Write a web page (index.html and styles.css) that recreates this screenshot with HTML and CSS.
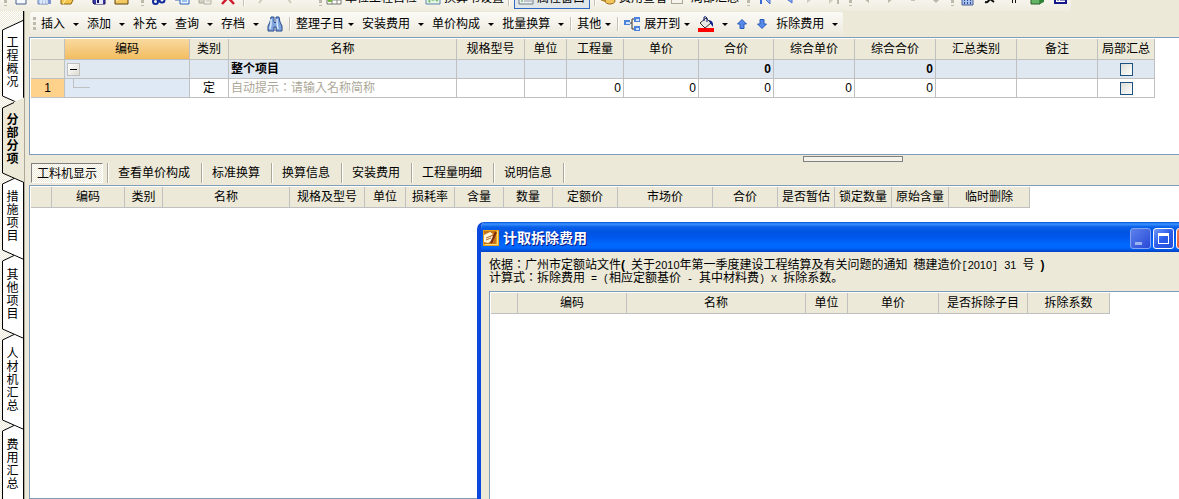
FILE: index.html
```html
<!DOCTYPE html>
<html lang="zh-CN">
<head>
<meta charset="utf-8">
<title>分部分项</title>
<link rel="stylesheet" href="styles.css">
</head>
<body>
<div class="app">
  <header class="topbar">
    <div class="seg seg-a">
      <i class="grip"></i>
      <svg class="ico" viewBox="0 0 16 16"><path d="M2 1h10v13H2z" fill="#f4f8ff" stroke="#4a5d8c"/></svg>
      <svg class="ico" viewBox="0 0 16 16"><path d="M1 2h10v12H1z" fill="#b9cdf0" stroke="#6c83b8"/><path d="M1 8h11M4 5v9M7 5v9M10 5v9" stroke="#fff"/><path d="M11 6h3v8h-3z" fill="#7c93cf"/></svg>
      <svg class="ico" viewBox="0 0 16 16"><path d="M1 14V4h5l2 2h7l-4 8z" fill="#f6c64c" stroke="#8a6410"/><path d="M3 14l4-7h8" fill="none" stroke="#fff3b0"/></svg>
      <svg class="ico wide-before" viewBox="0 0 16 16"><path d="M2 1h12v13H3l-1-1z" fill="#3a35a8" stroke="#17145c"/><path d="M5 9h7v5H5z" fill="#e8e8f8"/><path d="M6 10h2v3H6z" fill="#17145c"/></svg>
      <svg class="ico" viewBox="0 0 16 16"><path d="M1 2h13v12H1z" fill="#f4c860" stroke="#5e4310"/><path d="M2 10l11-4" stroke="#fff0b8" stroke-width="2"/></svg>
    </div>
    <div class="seg seg-b">
      <i class="grip"></i>
      <svg class="ico" viewBox="0 0 16 16"><path d="M5 0l4 9M11 0L7 9" stroke="#445" fill="none"/><circle cx="4.500" cy="11.500" r="2.500" fill="none" stroke="#102a9c" stroke-width="2"/><circle cx="11" cy="10" r="2.500" fill="none" stroke="#102a9c" stroke-width="2"/></svg>
      <svg class="ico" viewBox="0 0 16 16"><path d="M1 0h8v10H1z" fill="#dce9ff" stroke="#3c66b8"/><path d="M6 4h9v10H6z" fill="#e8f3ff" stroke="#2e62b8"/><path d="M8 8h5M8 11h5" stroke="#4d91dd"/></svg>
      <svg class="ico" viewBox="0 0 16 16"><path d="M2 1h10v12H2z" fill="#d6d3c6" stroke="#aaa797"/><path d="M7 5h7v9H7z" fill="#f4f2ea" stroke="#b1ae9f"/><path d="M9 9h4M9 11h4" stroke="#c0bdae"/></svg>
      <svg class="ico" viewBox="0 0 16 16"><path d="M2 14L13 2M3 2l11 12" stroke="#d21a2c" stroke-width="2.500"/></svg>
      <i class="sep"></i>
      <svg class="ico" viewBox="0 0 16 16"><path d="M4 5q8-2 6 4l-3 4" fill="none" stroke="#cfccbd" stroke-width="2"/></svg>
      <svg class="ico wide-before" viewBox="0 0 16 16"><path d="M12 5q-9-2-7 4l3 4" fill="none" stroke="#cfccbd" stroke-width="2"/></svg>
    </div>
    <div class="seg seg-c">
      <i class="grip"></i>
      <button class="cmd first"><svg class="ico" viewBox="0 0 16 16"><path d="M1 1h14v13H1z" fill="#fff" stroke="#77776e"/><path d="M1 6h14M1 10h14M6 1v13M11 1v13" stroke="#88877e"/><path d="M2 7h4v5H2z" fill="#77b843"/></svg>单位工程自检</button>
      <button class="cmd"><svg class="ico" viewBox="0 0 16 16"><path d="M1 1h14v13H1z" fill="#e7f3e4" stroke="#5c85a8"/><path d="M5 12a4 4 0 1 1 6 0" fill="none" stroke="#6ab56a" stroke-width="2" stroke-dasharray="2 1"/><circle cx="8" cy="9" r="2" fill="#8fce8f"/></svg>换算书设置</button>
      <i class="sep"></i>
      <button class="cmd pressed"><svg class="ico" viewBox="0 0 16 16"><path d="M1 1h14v13H1z" fill="#eef1ee" stroke="#6c7c88"/><path d="M3 8h2M3 11h2" stroke="#3d9a4d"/><path d="M6 8h8M6 11h8" stroke="#99a"/></svg>属性窗口</button>
      <i class="sep"></i>
      <button class="cmd"><svg class="ico" viewBox="0 0 16 16"><ellipse cx="6" cy="6" rx="5" ry="2" fill="#f8d878" stroke="#a87820"/><path d="M1 6v4q5 3 10 0V6" fill="#e5b54a" stroke="#a87820"/><ellipse cx="10" cy="11" rx="5" ry="3" fill="#f2c55c" stroke="#9c6d18"/></svg>费用查看</button>
      <label class="cmd local"><input class="topcheck" type="checkbox">局部汇总</label>
    </div>
    <div class="seg seg-d">
      <i class="grip"></i>
      <svg class="ico" viewBox="0 0 16 16"><path d="M4 1v13" stroke="#3867d6" stroke-width="2"/><path d="M13 1v13L6 7z" fill="#86a8f2" stroke="#4a72d0"/></svg>
      <svg class="ico" viewBox="0 0 16 16"><path d="M12 1v12L4 7z" fill="#86a8f2" stroke="#4a72d0"/></svg>
      <svg class="ico" viewBox="0 0 16 16"><path d="M4 1v12l8-6z" fill="#cfccbe"/></svg>
      <svg class="ico" viewBox="0 0 16 16"><path d="M3 1v13l7-7z" fill="#cfccbe"/><path d="M12 1v13" stroke="#bbb8aa" stroke-width="2"/></svg>
    </div>
    <div class="seg seg-e">
      <i class="grip"></i>
      <svg class="ico" viewBox="0 0 16 16"><path d="M10 5v8L5 9z" fill="#bbb8aa"/></svg>
      <svg class="ico" viewBox="0 0 16 16"><path d="M6 5v8l5-4z" fill="#bbb8aa"/></svg>
      <svg class="ico" viewBox="0 0 16 16"><path d="M6 5h4v6H6z" fill="#c6c3b5"/></svg>
      <svg class="ico" viewBox="0 0 16 16"><path d="M3 8h10l-5 5z" fill="#bbb8aa"/></svg>
    </div>
    <div class="seg seg-f">
      <i class="grip"></i>
      <svg class="ico" viewBox="0 0 16 16"><path d="M1 1h11v14H1z" fill="#a9c3ee" stroke="#4c5f96"/><path d="M3 10h1M6 10h1M9 10h1M3 13h1M6 13h1M9 13h1" stroke="#2b4795" stroke-width="2"/></svg>
      <svg class="ico" viewBox="0 0 16 16"><path d="M1 12q4 1 5-5h5M6 9l4 3" fill="none" stroke="#111" stroke-width="2"/></svg>
      <svg class="ico" viewBox="0 0 16 16"><path d="M5.500 2v11M8.500 2v11" stroke="#111"/></svg>
      <svg class="ico" viewBox="0 0 16 16"><path d="M1 2h9v12H1z" fill="#61b565" stroke="#245f2a"/><path d="M10 3l4 3v6l-4 2z" fill="#2f8238"/></svg>
      <svg class="ico" viewBox="0 0 16 16"><path d="M2 2h11v11H2z" fill="#fff" stroke="#17178c" stroke-width="2"/><path d="M4 7h2M7 7h5M4 10h2M7 10h5" stroke="#17178c"/></svg>
    </div>
  </header>

  <div class="body">
    <nav class="rail">
      <button class="vtab"><svg viewBox="0 0 23 86"><path d="M21 .5L.5 10v66L21 85.500" fill="#fff"/><path d="M22 0L.5 10v66L22 85.500" fill="none" stroke="#000"/></svg><span>工程概况</span></button>
      <button class="vtab active"><svg viewBox="0 0 23 86"><path d="M23 0L.5 10v66L23 86" fill="#ece9d8"/><path d="M12 5.500L.5 11v65L22 85.500" fill="none" stroke="#000"/></svg><span>分部分项</span></button>
      <button class="vtab"><svg viewBox="0 0 23 86"><path d="M12 5L.5 10v66L21 85.500V9z" fill="#fff"/><path d="M12 4.500L.5 10v66L22 85.500" fill="none" stroke="#000"/></svg><span>措施项目</span></button>
      <button class="vtab"><svg viewBox="0 0 23 88"><path d="M12 5L.5 10v68L21 87.500V9z" fill="#fff"/><path d="M12 4.500L.5 10v68L22 87.500" fill="none" stroke="#000"/></svg><span>其他项目</span></button>
      <button class="vtab"><svg viewBox="0 0 23 100"><path d="M12 5L.5 10v80L21 99.500V9z" fill="#fff"/><path d="M12 4.500L.5 10v80L22 99.500" fill="none" stroke="#000"/></svg><span>人材机汇总</span></button>
      <button class="vtab"><svg viewBox="0 0 23 88"><path d="M12 5L.5 10v68L21 87.500V9z" fill="#fff"/><path d="M12 4.500L.5 10v68L22 87.500" fill="none" stroke="#000"/></svg><span>费用汇总</span></button>
    </nav>

    <main class="work">
      <div class="toolbar">
        <i class="grip"></i>
        <button class="menu">插入</button>
        <button class="menu">添加</button>
        <button class="menu tight">补充</button>
        <button class="menu">查询</button>
        <button class="menu">存档</button>
        <button class="tool" aria-label="查找"><svg class="ico" viewBox="0 0 16 16"><path d="M4 1h3v5l1 1 1-1V1h3l1 5 2 4v5H9v-4H7v4H1v-5l2-4z" fill="#7fa5dc" stroke="#284a8c"/><path d="M4 3v5L3 13M10 3v4l1 6" stroke="#d9e9ff" stroke-width="1.500" fill="none"/></svg></button>
        <i class="sep"></i>
        <button class="menu tight">整理子目</button>
        <button class="menu">安装费用</button>
        <button class="menu">单价构成</button>
        <button class="menu">批量换算</button>
        <i class="sep"></i>
        <button class="menu tight">其他</button>
        <i class="sep"></i>
        <button class="menu tight"><svg class="ico" viewBox="0 0 16 16"><path d="M6 7h2M8 3v10h2M8 3h2" fill="none" stroke="#333"/><path d="M0 4h6v5H0zM10 1h6v5h-6zM10 10h6v5h-6z" fill="#4d82dc"/><path d="M2 6h4v2H2zM12 3h3v2h-3zM12 12h3v2h-3z" fill="#cfe2ff"/></svg>展开到</button>
        <button class="menu" aria-label="填充颜色"><svg class="ico" viewBox="0 0 16 16"><path d="M2 7l6-5 5 5-6 5z" fill="#e9e9e4" stroke="#333"/><path d="M6 5V1q2-1 3 1v4" fill="none" stroke="#111a70"/><path d="M11 4q5 1 4 7l-3-4z" fill="#0a2090"/><path d="M0 12h16v4H0z" fill="#f00"/></svg></button>
        <button class="tool arrow" aria-label="上移"><svg viewBox="0 0 10 10"><path d="M5 .5L9.500 5H7v4.500H3V5H.5z" fill="#568ae8" stroke="#2a5bbb"/></svg></button>
        <button class="tool arrow" aria-label="下移"><svg viewBox="0 0 10 10"><path d="M5 9.500L9.500 5H7V.5H3V5H.5z" fill="#568ae8" stroke="#2a5bbb"/></svg></button>
        <button class="menu">拆除费用</button>
      </div>

      <section class="pane upper">
        <table class="grid project">
          <colgroup><col class="w34"><col class="w125"><col class="w39"><col class="w228"><col class="w68"><col class="w42"><col class="w57"><col class="w75"><col class="w75"><col class="w81"><col class="w81"><col class="w81"><col class="w81"><col class="w57"></colgroup>
          <thead><tr><th></th><th class="current">编码</th><th>类别</th><th>名称</th><th>规格型号</th><th>单位</th><th>工程量</th><th>单价</th><th>合价</th><th>综合单价</th><th>综合合价</th><th>汇总类别</th><th>备注</th><th>局部汇总</th></tr></thead>
          <tbody>
            <tr class="total"><td class="rowhead"></td><td><button class="expander" aria-label="折叠"></button></td><td></td><td>整个项目</td><td></td><td></td><td></td><td></td><td class="num">0</td><td></td><td class="num">0</td><td></td><td></td><td class="mid"><input class="check" type="checkbox" aria-label="局部汇总"></td></tr>
            <tr><td class="rowhead now">1</td><td class="branch"><i></i></td><td class="mid">定</td><td><input class="name" lang="zh-TW" type="text" aria-label="名称" placeholder="自动提示：请输入名称简称"></td><td></td><td></td><td class="num">0</td><td class="num">0</td><td class="num">0</td><td class="num">0</td><td class="num">0</td><td></td><td></td><td class="mid"><input class="check" type="checkbox" aria-label="局部汇总"></td></tr>
          </tbody>
        </table>
      </section>

      <div class="splitter"><i></i></div>
      <div class="subtabs">
        <button class="selected">工料机显示</button><button>查看单价构成</button><button>标准换算</button><button>换算信息</button><button>安装费用</button><button>工程量明细</button><button>说明信息</button>
      </div>

      <section class="pane lower">
        <table class="grid detail">
          <colgroup><col class="w21"><col class="w73"><col class="w38"><col class="w127"><col class="w75"><col class="w41"><col class="w49"><col class="w49"><col class="w49"><col class="w65"><col class="w95"><col class="w65"><col class="w57"><col class="w57"><col class="w57"><col class="w81"></colgroup>
          <thead><tr><th></th><th>编码</th><th>类别</th><th>名称</th><th>规格及型号</th><th>单位</th><th>损耗率</th><th>含量</th><th>数量</th><th>定额价</th><th>市场价</th><th>合价</th><th>是否暂估</th><th>锁定数量</th><th>原始含量</th><th>临时删除</th></tr></thead>
        </table>
      </section>
    </main>
  </div>

  <div class="dialog" role="dialog" aria-labelledby="dlg-title">
    <div class="titlebar">
      <svg class="ico" viewBox="0 0 16 16"><path d="M0 0h16v16H0z" fill="#e8a21c"/><path d="M1 1h12v13H1z" fill="#c8741a"/><path d="M1 5l6-3 3 2-4 3 4-1v4l-5 3-4-1z" fill="#fff6dc"/><path d="M3 8l5-2M3 10l5-2" stroke="#b3682a"/><path d="M13 2L8 13" stroke="#7c2c0c" stroke-width="2"/><path d="M14.500 1v13.500H2" fill="none" stroke="#ffe07a"/></svg>
      <h1 id="dlg-title">计取拆除费用</h1>
      <div class="winbtns">
        <button class="faded" aria-label="最小化"><svg viewBox="0 0 21 21"><path d="M5 14h7v3H5z" fill="#9db4f4"/></svg></button>
        <button aria-label="最大化"><svg viewBox="0 0 21 21"><path d="M5 5h11v11H5zM6 8v7h9V8z" fill="#fff" fill-rule="evenodd"/></svg></button>
        <button class="close" aria-label="关闭"></button>
      </div>
    </div>
    <div class="content">
      <p>依据<span class="colon" lang="zh-TW">：</span>广州市定额站文件<b>(</b><span class="mono"> </span>关于<span class="digits">2010</span>年第一季度建设工程结算及有关问题的通知<span class="mono"> </span>穗建造价<span class="mono">[</span><span class="digits">2010</span><span class="mono">] </span><span class="digits">31</span><span class="mono"> </span>号<span class="mono"> </span><b>)</b></p>
      <p>计算式<span class="colon" lang="zh-TW">：</span>拆除费用<span class="mono"> = (</span>相应定额基价<span class="mono"> - </span>其中材料费<span class="mono">) X </span>拆除系数。</p>
      <div class="sheet">
        <table class="grid fees">
          <colgroup><col class="w27"><col class="w109"><col class="w179"><col class="w42"><col class="w91"><col class="w89"><col class="w82"></colgroup>
          <thead><tr><th></th><th>编码</th><th>名称</th><th>单位</th><th>单价</th><th>是否拆除子目</th><th>拆除系数</th></tr></thead>
        </table>
      </div>
    </div>
  </div>
</div>
</body>
</html>
```
FILE: styles.css
```css
*, *::before, *::after { box-sizing: border-box; }
body {
  margin: 0;
  background: #ece9d8;
  color: #000;
  font: 12px/16px "Liberation Sans", "Noto Sans CJK SC", sans-serif;
}
button { margin: 0; padding: 0; border: 0; background: none; color: inherit; font: inherit; white-space: nowrap; }
.app { position: relative; display: flex; flex-direction: column; height: 100vh; overflow: hidden; }

/* shared toolbar parts */
.ico { flex: none; display: block; width: 16px; height: 16px; }
.grip { flex: none; width: 3px; background: repeating-linear-gradient(#bdbaab 0 3px, transparent 3px 5px); }
.sep { flex: none; width: 2px; height: 14px; background: #c5c2b3; border-right: 1px solid #fff; }

/* top toolbar, scrolled partly out of view */
.topbar { flex: none; display: flex; height: 11px; overflow: hidden; }
.seg {
  flex: none; display: flex; align-items: flex-end; gap: 7px;
  padding: 0 4px 5px; border-radius: 0 0 3px 3px;
  background: linear-gradient(#f6f4ec, #efecdf);
}
.seg .grip { height: 6px; }
.seg .sep { height: 8px; }
.seg-a { width: 137px; }
.seg-b { width: 178px; }
.seg-c { width: 428px; gap: 4px; }
.seg-d { width: 102px; }
.seg-e { width: 102px; }
.seg-f { width: 124px; }
.wide-before { margin-left: 8px; }
.cmd { flex: none; display: flex; align-items: flex-end; gap: 3px; line-height: 16px; white-space: nowrap; }
.cmd.first { margin-right: 4px; }
.cmd.pressed { margin-bottom: -3px; padding: 0 4px 2px 3px; border: 1px solid #316ac5; background: #e1e6e8; }
.local { gap: 8px; }
.topcheck { appearance: none; width: 12px; height: 12px; margin: 0 0 2px; border: 1px solid #aaa797; }

.body { flex: 1; display: flex; min-height: 0; }

/* vertical section tabs */
.rail {
  flex: none; width: 25px; height: 100%; padding: 9px 0 0 2px; overflow: hidden;
  border-right: 1px solid #aca899;
  box-shadow: inset -1px 0 #000;
  background: repeating-conic-gradient(#fff 0 25%, #ece9d8 0 50%) 0 0 / 2px 2px;
}
.vtab { display: grid; width: 23px; margin-bottom: -9px; justify-items: center; align-items: center; }
.vtab svg { grid-area: 1 / 1; display: block; width: 23px; }
.vtab span { grid-area: 1 / 1; width: 12px; margin-right: 2px; line-height: 13px; white-space: normal; word-break: break-all; }
.vtab.active { font-weight: bold; }

.work { flex: 1; min-width: 0; display: flex; flex-direction: column; padding-left: 4px; }
.toolbar {
  flex: none; align-self: flex-start; display: flex; align-items: center; gap: 8px;
  height: 24px; margin: 1px 0 1px 1px; padding: 0 5px 0 3px; border-radius: 3px;
  background: linear-gradient(#fbfaf6, #ece9dc);
}
.toolbar .grip { height: 15px; margin-right: -3px; }
.toolbar .sep { margin: 0 -3px 0 -2px; }
.menu { display: flex; align-items: center; gap: 8px; }
.menu::after { content: ""; width: 6px; border: solid transparent; border-width: 3px 3px 0; border-top-color: #000; }
.menu.tight { gap: 4px; }
.tool { display: block; }
.arrow { width: 12px; padding: 0 1px; }
.arrow svg { display: block; width: 10px; height: 10px; }

/* panes and grids */
.pane { background: #fff; border: 1px solid #7f9db9; border-right: 0; padding: 1px 0 0 1px; overflow: hidden; }
.upper { flex: none; height: 118px; }
.lower { flex: 1; }
.grid { table-layout: fixed; width: 0; border-collapse: separate; border-spacing: 0; }
.grid th, .grid td { padding: 0; border: solid #c0c0c0; border-width: 0 1px 1px 0; overflow: hidden; white-space: nowrap; }
.grid th { height: 21px; background: #ece9d8; font-weight: normal; line-height: 16px; }
.grid td { height: 19px; padding: 0 2px; line-height: 16px; }
.grid th.current { background: linear-gradient(#f9d9a0, #f2bd60); }
.total td { background: #dfe7f0; font-weight: bold; }
.grid .rowhead { background: #ece9d8; text-align: center; }
.grid .rowhead.now { background: #ffd28b; }
.num { text-align: right; }
.mid { text-align: center; }
.grid .branch { background: #dfe9f6; vertical-align: top; }
.branch i { display: block; width: 17px; height: 9px; margin-left: 6px; border: solid #c0c0c0; border-width: 0 0 1px 1px; }
.expander { display: grid; place-items: center; width: 13px; height: 13px; border: 1px solid #c0c0c0; background: linear-gradient(135deg, #fff, #dedcd2); }
.expander::before { content: ""; width: 7px; height: 1px; background: #000; }
.check { appearance: none; display: block; width: 13px; height: 13px; margin: 0 auto; border: 1px solid #1c5180; background: linear-gradient(135deg, #dcdcd7, #fff); }
.name { display: block; width: 100%; height: 16px; padding: 0; border: 0; background: none; font: inherit; outline: 0; }
.name::placeholder { color: #aca899; opacity: 1; }

.w21 { width: 21px; } .w27 { width: 27px; } .w34 { width: 34px; } .w38 { width: 38px; }
.w39 { width: 39px; } .w41 { width: 41px; } .w42 { width: 42px; } .w49 { width: 49px; }
.w57 { width: 57px; } .w65 { width: 65px; } .w68 { width: 68px; } .w73 { width: 73px; }
.w75 { width: 75px; } .w81 { width: 81px; } .w82 { width: 82px; } .w89 { width: 89px; }
.w91 { width: 91px; } .w95 { width: 95px; } .w109 { width: 109px; } .w125 { width: 125px; }
.w127 { width: 127px; } .w179 { width: 179px; } .w228 { width: 228px; }

.splitter { flex: none; height: 8px; padding-top: 1px; }
.splitter i { display: block; width: 100px; height: 6px; margin-left: auto; margin-right: 24%; border: 1px solid #808080; background: #f4f2e8; }
.subtabs { flex: none; display: flex; height: 22px; padding-left: 2px; }
.subtabs button { height: 20px; padding: 0 11px 0 10px; border-right: 1px solid #aca899; box-shadow: 1px 0 #fff; line-height: 20px; }
.subtabs .selected {
  width: 72px; margin-right: 5px; padding: 0; border: 1px solid; border-color: #808080 #fff #fff #808080; box-shadow: 4px 0 #ece9d8, 5px 0 #aca899, 6px 0 #fff;
  background: repeating-conic-gradient(#fff 0 25%, #ece9d8 0 50%) 0 0 / 2px 2px;
}

/* floating fee dialog, runs past the window edge */
.dialog {
  position: absolute; left: 477px; top: 222px; right: 0; bottom: 0;
  display: flex; flex-direction: column; overflow: hidden;
  border-left: 4px solid #0a48e0; border-radius: 7px 0 0 0; background: #ece9d8;
}
.titlebar {
  flex: none; display: flex; align-items: center; gap: 4px; height: 30px; margin-left: -4px; padding: 2px 0 0 6px;
  background: linear-gradient(#0050d8, #3c92ff 2px, #0a60e8 5px, #0054e3 10px, #0058ee 16px, #0068ff 22px, #0066fc 26px, #0040c4);
}
.titlebar h1 { flex: 1; margin: 0; color: #fff; font-size: 14px; line-height: 18px; font-weight: bold; text-shadow: 1px 1px #0a1883; }
.winbtns { display: flex; gap: 2px; width: 49px; overflow: hidden; }
.winbtns button { flex: none; width: 21px; height: 21px; border: 1px solid #fff; border-radius: 3px; background: linear-gradient(135deg, #6f98f8, #2c5cea 50%, #2350d8); }
.winbtns svg { display: block; width: 21px; height: 21px; margin: -1px; }
.winbtns .faded { border-color: #84a3f3; background: linear-gradient(135deg, #5c82ea, #2848d8); }
.winbtns .close { background: linear-gradient(135deg, #f08060, #d84020); }
.content { flex: 1; display: flex; flex-direction: column; padding: 7px 0 0 8px; }
.content p { height: 13px; margin: 0; line-height: 13px; white-space: pre; }
.content p span { line-height: 0; }
.mono { font-family: "Liberation Mono", monospace; font-size: 10px; }
.digits { font-size: 11px; }
.colon { font-family: "Noto Sans CJK TC", sans-serif; }
.sheet { flex: 1; margin-top: 6px; border: 1px solid #7f9db9; border-right: 0; border-bottom: 0; padding: 1px 0 0 1px; background: #fff; }
```
